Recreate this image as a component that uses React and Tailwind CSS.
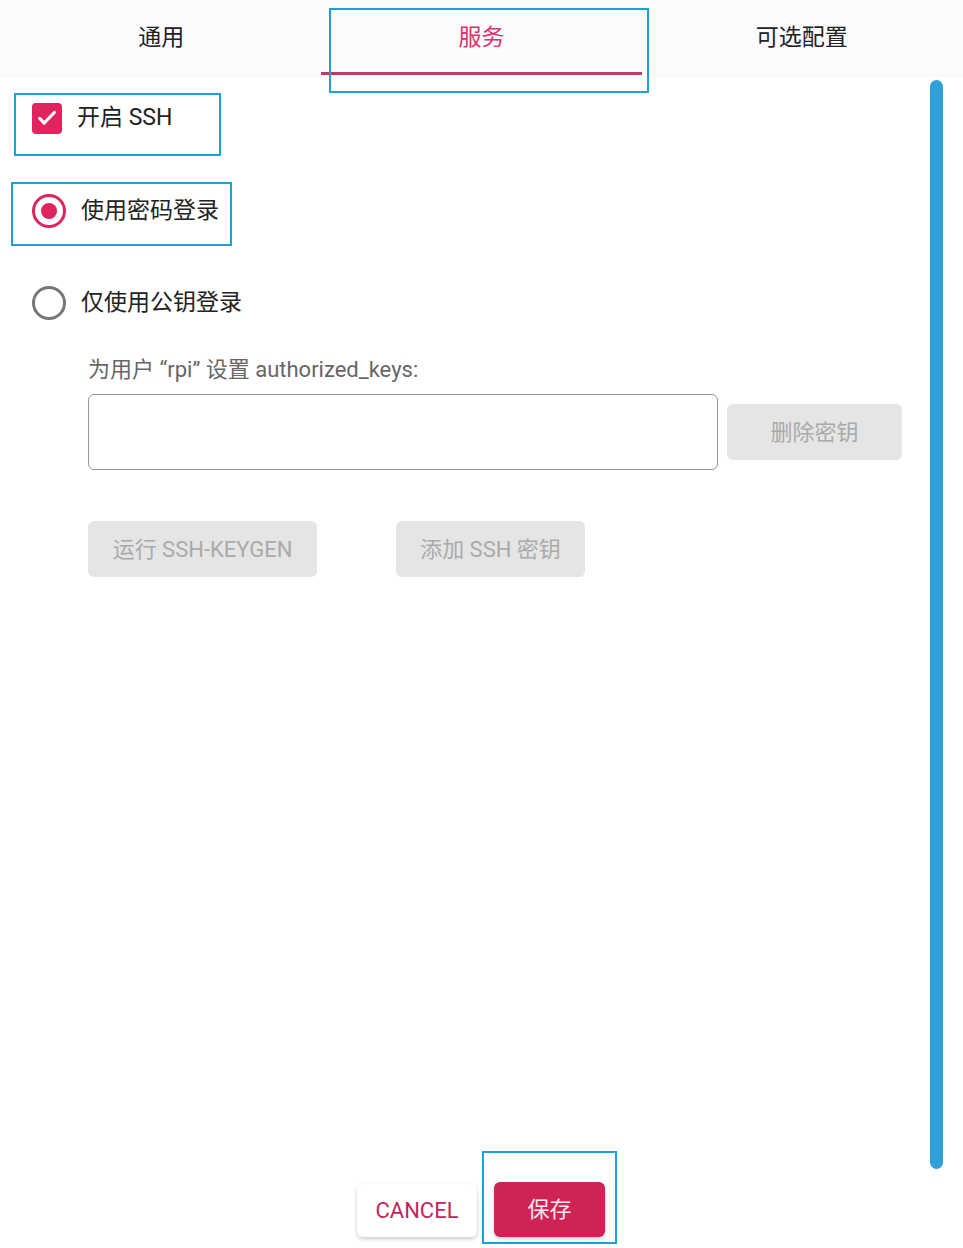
import React, { useState } from "react";

const font = { fontFamily: 'Roboto, "Noto Sans CJK SC", sans-serif' };

function Tab({ label, active, onClick }) {
  return (
    <button
      onClick={onClick}
      className={
        "relative flex-1 h-full flex items-center justify-center text-[23px] " +
        (active ? "text-[#e0306e]" : "text-[#222]")
      }
    >
      <span className="-mt-[2px]">{label}</span>
      {active && <span className="absolute left-0 right-0 top-[72px] h-[3px] bg-[#c8346a]" />}
    </button>
  );
}

export default function App() {
  const [tab, setTab] = useState(1);
  const [ssh, setSsh] = useState(true);
  const [mode, setMode] = useState("password");

  return (
    <div className="relative w-[963px] h-[1248px] bg-white overflow-hidden" style={font}>
      {/* tabs */}
      <div className="flex h-[78px] bg-[#fbfafd] pl-[1px] pr-[1px]">
        {["通用", "服务", "可选配置"].map((t, i) => (
          <Tab key={t} label={t} active={tab === i} onClick={() => setTab(i)} />
        ))}
      </div>
      <div className="absolute left-[329px] top-[8px] w-[320px] h-[85px] border-2 border-[#1ba1d8] pointer-events-none" />

      {/* scrollbar */}
      <div className="absolute left-[930px] top-[80px] w-[13px] h-[1089px] rounded-full bg-[#2fa0d8]" />

      <div className="pl-[32px] pt-[24px]">
        {/* enable ssh */}
        <label className="relative flex items-center gap-[15px] h-[32px] cursor-pointer" onClick={() => setSsh(!ssh)}>
          <span className="w-[30px] h-[31px] rounded-[4px] bg-[#e0245e] flex items-center justify-center">
            {ssh && (
              <svg width="22" height="22" viewBox="0 0 24 24" fill="none" stroke="white" strokeWidth="3.4" strokeLinecap="round" strokeLinejoin="round">
                <path d="M4 12.5l5 5L20 6" />
              </svg>
            )}
          </span>
          <span className="text-[23px] text-[#222]">开启 SSH</span>
          <span className="absolute -left-[18px] -top-[9px] w-[207px] h-[63px] border-2 border-[#1ba1d8] pointer-events-none" />
        </label>

        {/* password */}
        <div className="relative flex items-center gap-[15px] mt-[60px] h-[34px] cursor-pointer" onClick={() => setMode("password")}>
          <span className={"w-[34px] h-[34px] rounded-full border-[3px] flex items-center justify-center " + (mode === "password" ? "border-[#e0245e]" : "border-[#777]")}>
            {mode === "password" && <span className="w-[16px] h-[16px] rounded-full bg-[#e0245e]" />}
          </span>
          <span className="text-[23px] text-[#222]">使用密码登录</span>
          <span className="absolute -left-[21px] -top-[12px] w-[221px] h-[64px] border-2 border-[#1ba1d8] pointer-events-none" />
        </div>

        {/* public key */}
        <div className="flex items-center gap-[15px] mt-[58px] h-[34px] cursor-pointer" onClick={() => setMode("key")}>
          <span className={"w-[34px] h-[34px] rounded-full border-[3px] flex items-center justify-center " + (mode === "key" ? "border-[#e0245e]" : "border-[#777]")}>
            {mode === "key" && <span className="w-[16px] h-[16px] rounded-full bg-[#e0245e]" />}
          </span>
          <span className="text-[23px] text-[#222]">仅使用公钥登录</span>
        </div>

        {/* keys */}
        <div className="pl-[56px] mt-[36px]">
          <div className="text-[22px] text-[#666] leading-[28px]">为用户 “rpi” 设置 authorized_keys:</div>
          <div className="flex items-start gap-[9px] mt-[10px]">
            <textarea className="w-[630px] h-[76px] border border-[#999] rounded-[6px] resize-none outline-none px-3 py-2" />
            <button disabled className="mt-[10px] w-[175px] h-[56px] rounded-[6px] bg-[#e5e5e5] text-[22px] text-[#aaa]">删除密钥</button>
          </div>
          <div className="flex gap-[79px] mt-[51px]">
            <button disabled className="w-[229px] h-[56px] rounded-[6px] bg-[#e5e5e5] text-[22px] text-[#aaa]">运行 SSH-KEYGEN</button>
            <button disabled className="w-[189px] h-[56px] rounded-[6px] bg-[#e5e5e5] text-[22px] text-[#aaa]">添加 SSH 密钥</button>
          </div>
        </div>
      </div>

      {/* footer */}
      <div className="absolute left-[357px] top-[1182px] flex items-end gap-[17px]">
        <button className="w-[120px] h-[53px] rounded-[6px] bg-white shadow-[0_2px_4px_rgba(0,0,0,0.2)] text-[22px] text-[#c2255c]">CANCEL</button>
        <div className="relative">
          <button className="w-[111px] h-[55px] rounded-[6px] bg-[#cd2355] shadow-[0_2px_4px_rgba(0,0,0,0.2)] text-[22px] text-[#fde6ee]">保存</button>
          <span className="absolute -left-[12px] -top-[31px] w-[135px] h-[93px] border-2 border-[#1ba1d8] pointer-events-none" />
        </div>
      </div>
    </div>
  );
}
